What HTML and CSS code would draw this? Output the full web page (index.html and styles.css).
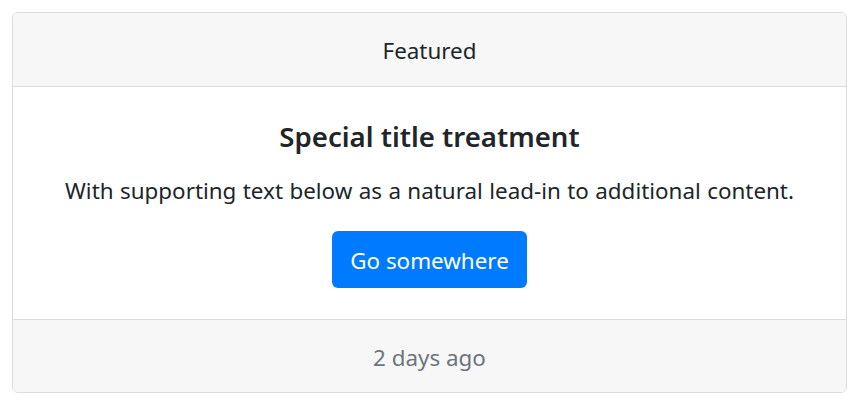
FILE: index.html
```html
<!DOCTYPE html>
<html lang="en">
<head>
  <meta charset="UTF-8">
  <meta name="viewport" content="width=device-width, initial-scale=1.0">
  <title>Card</title>
  <link rel="stylesheet" href="styles.css">
</head>
<body>
  <div class="card">
    <div class="card-header">Featured</div>
    <div class="card-body">
      <h5 class="card-title">Special title treatment</h5>
      <p class="card-text">With supporting text below as a natural lead-in to additional content.</p>
      <a href="#" class="btn">Go somewhere</a>
    </div>
    <div class="card-footer">2 days ago</div>
  </div>
</body>
</html>
```

FILE: styles.css
```css
*{margin: 0;padding: 0;box-sizing: border-box;}
body {
  margin: 12px 6px 0 12px;
  font-family: "Noto Sans", "Open Sans", sans-serif;
  font-size: 22.4px;
  line-height: 36px;
  color: #212529;
  background: #fff;
}
.card {
  border: 1.5px solid #dcdcdc;
  border-radius: 6px;
  text-align: center;
  overflow: hidden;
}
.card-header {
  padding: 20px 30px 17px;
  background-color: #f7f7f7;
  border-bottom: 1.5px solid #dcdcdc;
}
.card-body {
  padding: 30px 30px 31px;
}
.card-title {
  font-size: 27.6px;
  font-weight: 600;
  line-height: 36px;
  padding-top: 1px;
  margin-bottom: 17px;
}
.card-text {
  padding-top: 2px;
  margin-bottom: 22px;
  word-spacing: 0.6px;
}
.btn {
  display: inline-block;
  padding: 11.5px 18px 9.5px;
  background-color: #007bff;
  color: #fff;
  text-decoration: none;
  border-radius: 6px;
}
.card-footer {
  padding: 20px 30px 16px;
  background-color: #f7f7f7;
  border-top: 1.5px solid #dcdcdc;
  color: #6c757d;
}
```
